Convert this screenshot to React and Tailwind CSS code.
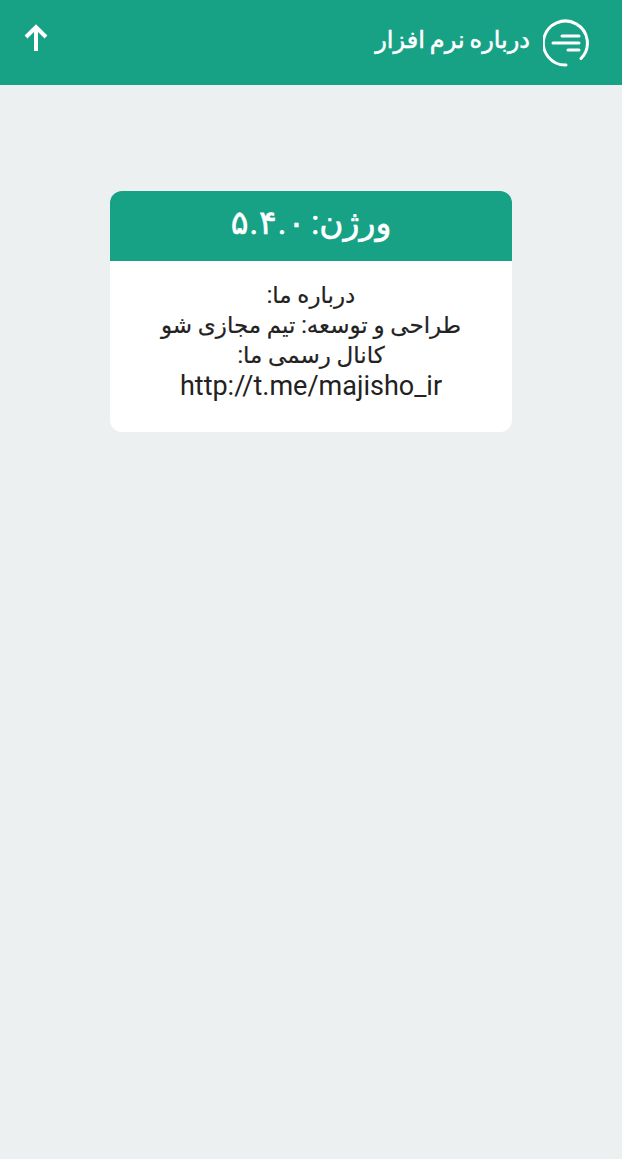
import React from "react";

// Round menu icon with a gap in the lower right
function MenuCircleIcon() {
  return (
    <svg width="48" height="48" viewBox="0 0 48 48" fill="none" stroke="white" strokeWidth="3" strokeLinecap="round">
      <path d="M38 39.5 A22 22 0 1 0 23 46" />
      <path d="M19 17 H36" />
      <path d="M10 24 H36" />
      <path d="M25 31 H36" />
    </svg>
  );
}

function ArrowUpIcon() {
  return (
    <svg width="26" height="30" viewBox="0 0 26 30" fill="none" stroke="white" strokeWidth="4">
      <path d="M13 28 V4" />
      <path d="M3 14 L13 4 L23 14" />
    </svg>
  );
}

export default function App() {
  return (
    <div className="min-h-[1159px] bg-[#ecf0f1] font-['Roboto','DejaVu_Sans',sans-serif]">
      {/* Header */}
      <header className="h-[85px] bg-[#17a185] flex items-center justify-between pl-[23px] pr-[31px]">
        <div className="-mt-[9px]">
          <ArrowUpIcon />
        </div>
        <div className="flex items-center gap-[13px]" dir="rtl">
          <MenuCircleIcon />
          <span className="text-white text-[24px] -mt-[6px] [word-spacing:-1px] [-webkit-text-stroke:0.5px_white]">درباره نرم افزار</span>
        </div>
      </header>

      {/* Card */}
      <div className="pt-[106px] flex justify-center">
        <section className="w-[402px] rounded-xl overflow-hidden bg-white">
          <h1 className="h-[70px] pb-[6px] bg-[#17a185] text-white text-[33px] flex items-center justify-center gap-[6px] [-webkit-text-stroke:0.6px_white]" dir="rtl">
            <span>ورژن:</span>
            {/* digits spaced one by one, letter-spacing has no effect on them */}
            <span className="flex gap-[1px]" dir="ltr">
              <span>۵</span>
              <span>.</span>
              <span>۴</span>
              <span>.</span>
              <span>۰</span>
            </span>
          </h1>
          <div className="h-[171px] pt-[20px] text-center text-[#222] text-[23px] leading-[30px] [-webkit-text-stroke:0.2px_#222]">
            <p dir="rtl">درباره ما:</p>
            <p dir="rtl">طراحی و توسعه: تیم مجازی شو</p>
            <p dir="rtl">کانال رسمی ما:</p>
            <p className="text-[27px] [-webkit-text-stroke:0px]">http://t.me/majisho_ir</p>
          </div>
        </section>
      </div>
    </div>
  );
}
